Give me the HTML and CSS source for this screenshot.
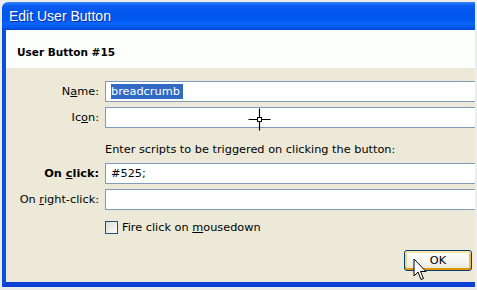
FILE: index.html
```html
<!DOCTYPE html>
<html>
<head>
<meta charset="utf-8">
<link rel="stylesheet" href="styles.css">
</head>
<body>
<div class="window">
  <div class="titlebar"><span class="title">Edit User Button</span></div>
  <div class="frame">
    <div class="header">User Button #15</div>
    <div class="content">
      <div class="form">
        <label class="lbl">N<u>a</u>me:</label>
        <div class="field"><span class="sel">breadcrumb&nbsp;</span></div>
        <label class="lbl">Ic<u>o</u>n:</label>
        <div class="field"></div>
        <div></div>
        <div class="hint">Enter scripts to be triggered on clicking the button:</div>
        <label class="lbl bold">On <u>c</u>lick:</label>
        <div class="field">#525;</div>
        <label class="lbl">On <u>r</u>ight-click:</label>
        <div class="field"></div>
        <div></div>
        <div class="check"><span class="box"></span><span>Fire click on <u>m</u>ousedown</span></div>
      </div>
      <div class="buttons"><button class="ok">OK</button></div>
    </div>
  </div>
  <svg class="crosshair" width="23" height="23" viewBox="0 0 23 23">
    <path d="M11.5 0.5V9M11.5 14V22.5M0.5 11.5H9M14 11.5H22.5" stroke="#000" stroke-width="1.2" fill="none"/>
    <rect x="9.5" y="9.5" width="4" height="4" fill="#fff" stroke="#000" stroke-width="1"/>
  </svg>
  <svg class="arrow" width="14" height="23" viewBox="0 0 14 23">
    <path d="M1 1V18L5 14L8 21.5L10.5 20.5L7.5 13.5H13Z" fill="#fff" stroke="#000" stroke-width="1" stroke-linejoin="miter"/>
  </svg>
</div>
</body>
</html>
```

FILE: styles.css
```css
html, body {
  margin: 0;
  padding: 0;
}
body {
  background: #ececec;
  width: 477px;
  height: 290px;
  overflow: hidden;
  font-family: "DejaVu Sans", sans-serif;
  font-size: 11.3px;
  color: #000;
}
.window {
  position: relative;
  margin: 2px 0 0 2px;
  width: 473px;
  height: 285px;
  overflow: hidden;
}
.titlebar {
  height: 28px;
  box-sizing: border-box;
  padding-left: 7px;
  padding-bottom: 1px;
  display: flex;
  align-items: center;
  border-radius: 6px 0 0 0;
  background: linear-gradient(to bottom, #3d8cff 0px, #1a6cfa 2px, #0a5cf0 4px, #0356ee 10px, #0058f0 18px, #0a66ff 22px, #0058ee 25px, #0046d8 28px);
}
.title {
  color: #fff;
  font-family: "Liberation Sans", sans-serif;
  font-size: 14px;
  text-shadow: 1px 1px 0 #0a2ea0;
}
.frame {
  border-left: 4px solid #0a4fe0;
  border-bottom: 5px solid #0a3fd8;
  height: 252px;
}
.header {
  background: #fdfffd;
  height: 38px;
  box-sizing: border-box;
  padding: 16px 0 0 11px;
  font-weight: bold;
  font-size: 10.5px;
}
.content {
  background: #ece9d8;
  height: 214px;
  padding-top: 13px;
  box-sizing: border-box;
}
.form {
  display: grid;
  grid-template-columns: 93px 380px;
  column-gap: 6px;
  row-gap: 5px;
  align-items: center;
}
.lbl {
  text-align: right;
  color: #000;
}
.bold {
  font-weight: bold;
}
.field {
  height: 21px;
  box-sizing: border-box;
  border: 1px solid #7f9db9;
  border-right: none;
  background: #fff;
  padding: 0 4px 0 5px;
  display: flex;
  align-items: center;
}
.sel {
  background: #316ac5;
  color: #fff;
  line-height: 15px;
}
.hint {
  height: 16px;
  margin-top: 9px;
  line-height: 16px;
}
.check {
  margin-top: 6px;
  height: 13px;
  display: flex;
  align-items: center;
  gap: 4px;
}
.box {
  width: 11px;
  height: 11px;
  border: 1px solid #1c5180;
  background: linear-gradient(135deg, #dcdcd6, #fdfdfd);
}
.buttons {
  display: flex;
  justify-content: flex-end;
  padding-right: 3px;
  margin-top: 16px;
}
.ok {
  width: 68px;
  height: 21px;
  border: 1px solid #003c74;
  border-radius: 3px;
  background: linear-gradient(to bottom, #fff 0%, #f4f4ef 60%, #e6e3d6 100%);
  box-shadow: inset 0 2px 0 #ffe7a2, inset 0 -2px 0 #e59700, inset 2px 0 0 #f8d47c, inset -2px 0 0 #f0b84a;
  font-family: "DejaVu Sans", sans-serif;
  font-size: 11.3px;
  color: #000;
  padding: 0;
}
.crosshair {
  position: absolute;
  left: 246px;
  top: 106px;
}
.arrow {
  position: absolute;
  left: 411px;
  top: 256px;
}
```
